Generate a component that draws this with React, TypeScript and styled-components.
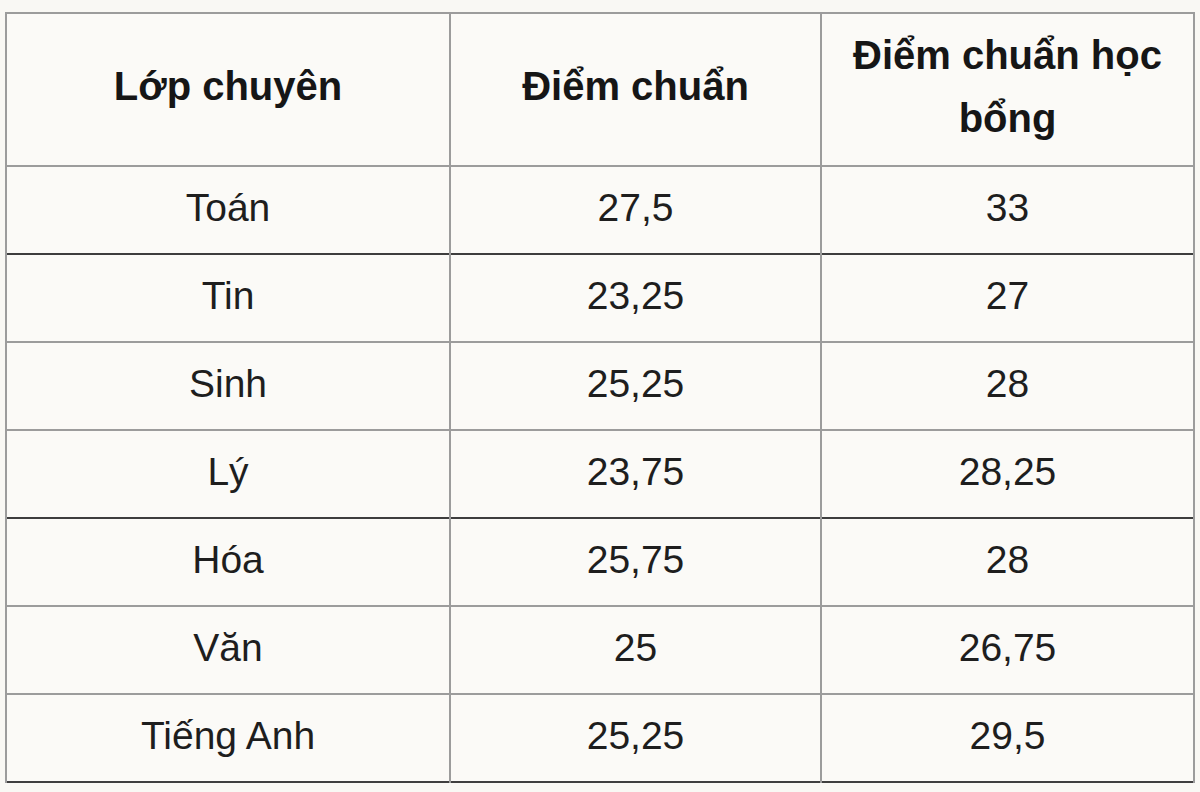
import React from "react";
import styled, { createGlobalStyle } from "styled-components";

const Global = createGlobalStyle`
  html, body { margin: 0; padding: 0; background: #f9f8f4; }
  body { font-family: "Liberation Sans", Arial, sans-serif; color: #1e1e1e; }
`;

const Page = styled.div`
  padding: 12px 0 0 5px;
  width: 1200px;
  height: 792px;
  box-sizing: border-box;
`;

const Table = styled.table`
  border-collapse: collapse;
  width: 1188px;
  table-layout: fixed;
  background: #fbfaf7;
  border-top: 2px solid #9c9c9c;
  border-right: 2px solid #8f8f8f;
  border-left: 2px solid #555;
  border-bottom: 2px solid #3f3f3f;
`;

const HeadCell = styled.th`
  font-weight: 700;
  font-size: 40px;
  line-height: 63px;
  color: #161616;
  text-align: center;
  vertical-align: middle;
  height: 153px;
  padding: 0 18px 6px;
  border: 2px solid #9c9c9c;
  box-sizing: border-box;
`;

const Row = styled.tr<{ $strong?: boolean }>`
  td {
    border-top: 2px solid ${(p) => (p.$strong ? "#3d3d3d" : "#9c9c9c")};
  }
`;

const Cell = styled.td`
  font-size: 39px;
  text-align: center;
  vertical-align: middle;
  height: 88px;
  padding: 0 0 4px;
  border-left: 2px solid #9c9c9c;
  border-right: 2px solid #9c9c9c;
  box-sizing: border-box;
`;

const rows: { name: string; a: string; b: string; strong?: boolean }[] = [
  { name: "Toán", a: "27,5", b: "33" },
  { name: "Tin", a: "23,25", b: "27", strong: true },
  { name: "Sinh", a: "25,25", b: "28" },
  { name: "Lý", a: "23,75", b: "28,25" },
  { name: "Hóa", a: "25,75", b: "28", strong: true },
  { name: "Văn", a: "25", b: "26,75" },
  { name: "Tiếng Anh", a: "25,25", b: "29,5" },
];

export default function App() {
  return (
    <>
      <Global />
      <Page>
        <Table>
          <colgroup>
            <col style={{ width: 444 }} />
            <col style={{ width: 371 }} />
            <col style={{ width: 373 }} />
          </colgroup>
          <thead>
            <tr>
              <HeadCell>Lớp chuyên</HeadCell>
              <HeadCell>Điểm chuẩn</HeadCell>
              <HeadCell>Điểm chuẩn học bổng</HeadCell>
            </tr>
          </thead>
          <tbody>
            {rows.map((r) => (
              <Row key={r.name} $strong={r.strong}>
                <Cell>{r.name}</Cell>
                <Cell>{r.a}</Cell>
                <Cell>{r.b}</Cell>
              </Row>
            ))}
          </tbody>
        </Table>
      </Page>
    </>
  );
}
